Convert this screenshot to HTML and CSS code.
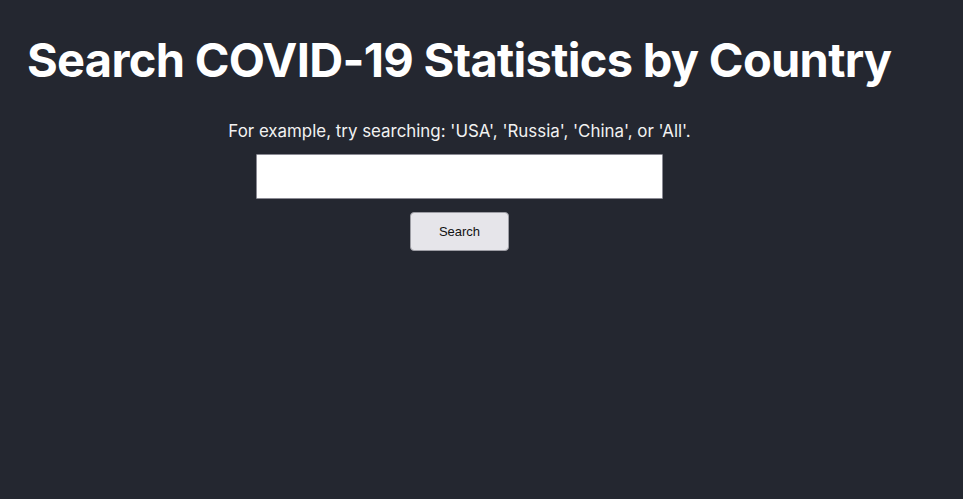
FILE: index.html
```html
<!DOCTYPE html>
<html>
<head>
<meta charset="utf-8">
<link rel="stylesheet" href="styles.css">
</head>
<body>
<div class="page">
  <h1 class="title">Search COVID-19 Statistics by Country</h1>
  <div class="search">
    <p class="hint">For example, try searching: 'USA', 'Russia', 'China', or 'All'.</p>
    <input class="field" type="text">
    <button class="btn">Search</button>
  </div>
</div>
</body>
</html>
```
FILE: styles.css
```css
html, body {
  margin: 0;
  padding: 0;
  background: #242730;
  height: 100%;
}
.page {
  width: 919px;
  font-family: Inter, "Noto Sans", sans-serif;
  color: #ffffff;
}
.title {
  margin: 0;
  padding: 28px 0 0 27px;
  font-size: 47px;
  font-weight: 700;
  line-height: 64px;
  letter-spacing: -0.7px;
  white-space: nowrap;
}
.search {
  display: flex;
  flex-direction: column;
  align-items: center;
}
.hint {
  margin: 29px 0 0;
  font-size: 16.9px;
  line-height: 20px;
  color: #f2f2f2;
}
.field {
  margin-top: 13px;
  width: 407px;
  height: 45px;
  box-sizing: border-box;
  border: 1px solid #8a8a93;
  border-radius: 1px;
  background: #fff;
}
.btn {
  margin-top: 13px;
  width: 99px;
  height: 39px;
  box-sizing: border-box;
  background: #e6e5ea;
  border: 1px solid #9d9da4;
  border-radius: 4px;
  font-family: "Liberation Sans", Arial, sans-serif;
  font-size: 13px;
  color: #111;
}
```
